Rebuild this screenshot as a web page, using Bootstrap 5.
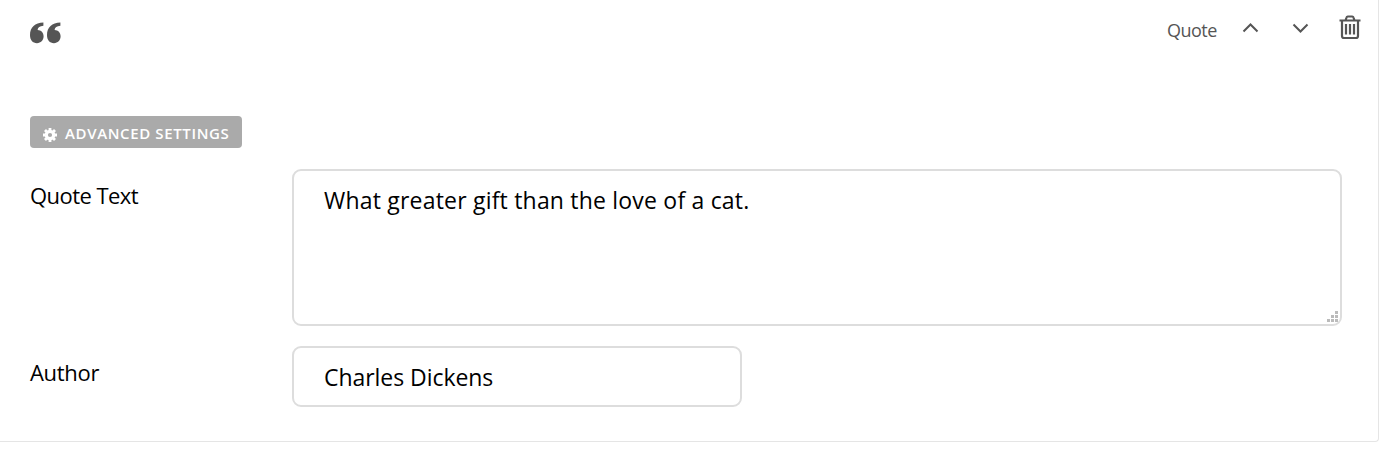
<!DOCTYPE html>
<html lang="en">
<head>
<meta charset="utf-8">
<meta name="viewport" content="width=device-width, initial-scale=1">
<title>Quote block</title>
<link href="https://cdn.jsdelivr.net/npm/bootstrap@5.3.0/dist/css/bootstrap.min.css" rel="stylesheet">
<style>
body{font-family:"Open Sans","Noto Sans",sans-serif;color:#000;background:#fff;overflow:hidden}
.block-panel{width:1379px;height:442px;border:solid #e5e5e5;border-width:0 1px 1px 0;border-bottom-right-radius:4px;padding:0 36px 0 30px}
.block-head{height:116px;margin-right:-18px;color:#555}
.block-head svg,.btn-adv svg{display:block;flex:none}
.quote-mark{margin-top:22px}
.kind{font-size:18px;line-height:24px;margin-top:18px;letter-spacing:-.5px;width:50px;white-space:nowrap}
.tool{border:0;background:none;padding:0;color:#555}
.tool-up{margin:22px 0 0 25px}
.tool-down{margin:22px 0 0 33px}
.tool-delete{margin:15px -1px 0 30px}
.btn-adv{height:32px;width:212px;padding:0 0 0 13px;background:#aaa;color:#fff;border:0;border-radius:4px;font-size:15px;font-weight:600;line-height:32px;letter-spacing:.2px;white-space:nowrap}
.btn-adv:hover{background:#999;color:#fff}
.btn-adv svg{margin-top:6px}
.adv-t{padding-top:2px;letter-spacing:.63px}
.settings-row{margin-top:21px}
.author-row{margin-top:20px}
.lbl{width:262px;font-size:22px;line-height:30px;padding-top:11px;letter-spacing:-.55px;flex:none}
.author-row .lbl{letter-spacing:-.3px}
.field{border:2px solid #ddd;border-radius:9px;padding:14px 30px;font-size:23px;line-height:32px;color:#000;background:#fff}
textarea.field{height:157px;resize:none;display:block;padding-top:13px;letter-spacing:.2px}
input.field{width:450px;height:61px;letter-spacing:-.05px}
.grip{right:4px;bottom:4px;pointer-events:none}
</style>
</head>
<body>
<main class="block-panel">
  <header class="block-head d-flex align-items-start justify-content-between">
    <svg class="quote-mark" width="31" height="22" viewBox="0 0 31 22" fill="currentColor" aria-hidden="true"><path id="q" d="M13.400.5v3.200C9.700 3.900 7.800 5.400 7.600 8.100c3.500.1 6 2.700 6 6.200 0 3.900-2.900 6.900-6.600 6.900-4.300 0-7-3.200-7-8.200C0 5.400 5 .5 13.400.5z"/><use href="#q" x="17"/></svg>
    <div class="d-flex align-items-start">
      <span class="kind">Quote</span>
      <button class="tool tool-up" aria-label="Move up"><svg width="17" height="12" viewBox="0 0 17 12" fill="none" stroke="currentColor" stroke-width="2"><path d="M1.500 9.500 8.500 2.500l7 7"/></svg></button>
      <button class="tool tool-down" aria-label="Move down"><svg width="17" height="12" viewBox="0 0 17 12" fill="none" stroke="currentColor" stroke-width="2"><path d="M1.500 2.500l7 7 7-7"/></svg></button>
      <button class="tool tool-delete" aria-label="Delete"><svg width="22" height="25" viewBox="0 0 22 25" fill="none" stroke="currentColor" stroke-width="2.200"><path d="M.5 5.500h21M3 5.500v15.500Q3 23 5 23h12q2 0 2-2V5.500M6.500 5.500 7.500 2.500q.3-1 1.300-1h4.400q1 0 1.300 1l1 3M7 9v10.500M11 9v10.500M15 9v10.500"/></svg></button>
    </div>
  </header>
  <button class="btn btn-adv d-flex align-items-center gap-2"><svg width="14" height="14" viewBox="-7 -7 14 14" fill="none" stroke="#fff" aria-hidden="true"><circle r="3.700" stroke-width="3.200"/><path d="M0-4.500V-7M0 4.500V7M-4.500 0H-7M4.500 0H7M-3.300-3.300l-1.700-1.700M3.300 3.300l1.700 1.700M-3.300 3.300l-1.700 1.700M3.300-3.300l1.700-1.700" stroke-width="2.800"/></svg><span class="adv-t">ADVANCED SETTINGS</span></button>
  <div class="settings-row d-flex align-items-start">
    <label class="lbl" for="qt">Quote Text</label>
    <div class="position-relative flex-grow-1">
      <textarea class="field w-100" id="qt">What greater gift than the love of a cat.</textarea>
      <svg class="grip position-absolute" width="11" height="11" viewBox="0 0 11 11" fill="#bbb" aria-hidden="true"><path d="M8 0h3v3H8zM4 4h3v3H4zM8 4h3v3H8zM0 8h3v3H0zM4 8h3v3H4zM8 8h3v3H8z"/></svg>
    </div>
  </div>
  <div class="author-row d-flex align-items-start">
    <label class="lbl" for="au">Author</label>
    <input class="field" id="au" type="text" value="Charles Dickens">
  </div>
</main>
<script src="https://cdn.jsdelivr.net/npm/bootstrap@5.3.0/dist/js/bootstrap.bundle.min.js"></script>
</body>
</html>
